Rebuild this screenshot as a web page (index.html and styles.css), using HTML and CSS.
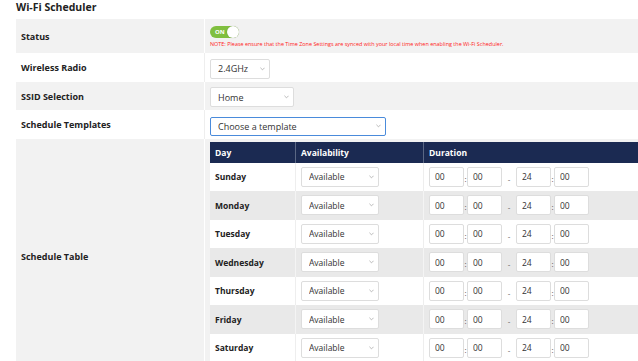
FILE: index.html
```html
<!DOCTYPE html>
<html lang="en">
<head>
  <meta charset="UTF-8">
  <title>Wi-Fi Scheduler</title>
  <link rel="stylesheet" href="styles.css">
</head>
<body>

  <h1 class="title">Wi-Fi Scheduler</h1>

  <table class="settings">
    <tr class="row grey status-row">
      <td class="label">Status</td>
      <td class="value">
        <div class="toggle"><span class="toggle-text">ON</span><span class="knob"></span></div>
        <div class="note">NOTE: Please ensure that the Time Zone Settings are synced with your local time when enabling the Wi-Fi Scheduler.</div>
      </td>
    </tr>
    <tr class="row white">
      <td class="label">Wireless Radio</td>
      <td class="value">
        <span class="select-wrap radio-select">
          <select><option>2.4GHz</option><option>5GHz</option></select>
          <svg class="chev" viewBox="0 0 6 4"><path d="M0.5 0.5 L3 3 L5.5 0.5" fill="none" stroke="#999" stroke-width="0.8"/></svg>
        </span>
      </td>
    </tr>
    <tr class="row grey">
      <td class="label">SSID Selection</td>
      <td class="value">
        <span class="select-wrap ssid-select">
          <select><option>Home</option></select>
          <svg class="chev" viewBox="0 0 6 4"><path d="M0.5 0.5 L3 3 L5.5 0.5" fill="none" stroke="#999" stroke-width="0.8"/></svg>
        </span>
      </td>
    </tr>
    <tr class="row white">
      <td class="label">Schedule Templates</td>
      <td class="value">
        <span class="select-wrap template-select">
          <select><option>Choose a template</option></select>
          <svg class="chev" viewBox="0 0 6 4"><path d="M0.5 0.5 L3 3 L5.5 0.5" fill="none" stroke="#999" stroke-width="0.8"/></svg>
        </span>
      </td>
    </tr>
    <tr class="row grey">
      <td class="label">Schedule Table</td>
      <td class="value table-cell">
        <table class="schedule">
          <thead>
            <tr>
              <th class="col-day">Day</th>
              <th class="col-avail">Availability</th>
              <th class="col-dur">Duration</th>
            </tr>
          </thead>
          <tbody id="days"></tbody>
        </table>
      </td>
    </tr>
  </table>

  <script>
    const days = ['Sunday', 'Monday', 'Tuesday', 'Wednesday', 'Thursday', 'Friday', 'Saturday'];
    const tbody = document.getElementById('days');
    const chev = '<svg class="chev" viewBox="0 0 6 4"><path d="M0.5 0.5 L3 3 L5.5 0.5" fill="none" stroke="#999" stroke-width="0.8"/></svg>';

    days.forEach(day => {
      const tr = document.createElement('tr');
      tr.innerHTML = `
        <td class="day">${day}</td>
        <td><span class="select-wrap avail-select"><select><option>Available</option><option>Unavailable</option></select>${chev}</span></td>
        <td class="duration">
          <input class="time" value="00"><span class="sep colon">:</span><input class="time" value="00"><span class="sep dash">-</span><input class="time" value="24"><span class="sep colon">:</span><input class="time" value="00">
        </td>`;
      tbody.appendChild(tr);
    });
  </script>

</body>
</html>
```

FILE: styles.css
```css
body {
  margin: 0;
  font-family: 'Open Sans', 'Noto Sans', sans-serif;
  background-color: #fff;
  color: #222;
  overflow: hidden;
}

.title {
  margin: 0;
  padding-left: 16px;
  height: 19px;
  font-size: 10.5px;
  line-height: 14px;
  font-weight: 700;
}

.settings {
  margin-left: 16px;
  width: 680px;
  border-collapse: collapse;
}

.row.grey {
  background-color: #f2f2f2;
}

.row.white {
  background-color: #fff;
}

.label {
  width: 183px;
  padding: 0 0 0 5px;
  font-size: 9px;
  font-weight: 700;
  vertical-align: middle;
}

.row.grey .label {
  border-right: 1px solid #fff;
}

.row.white .label {
  border-right: 1px solid #eee;
}

.value {
  padding: 3px 5px;
  height: 22px;
}

.status-row .value {
  padding: 7px 5px 5px;
}

.toggle {
  position: relative;
  width: 29px;
  height: 12px;
  border-radius: 6px;
  background-color: #80bf3f;
}

.toggle-text {
  position: absolute;
  left: 5px;
  top: 0;
  font-size: 6px;
  line-height: 12px;
  font-weight: 700;
  color: #fff;
}

.knob {
  position: absolute;
  right: 0;
  top: 0;
  width: 12px;
  height: 12px;
  border-radius: 50%;
  background-color: #fff;
  box-shadow: 0 0 1px rgba(0, 0, 0, 0.3);
}

.note {
  margin-top: 3px;
  font-size: 5.45px;
  line-height: 7px;
  color: #f22;
  white-space: nowrap;
}

.select-wrap {
  position: relative;
  display: inline-block;
  vertical-align: middle;
}

.select-wrap select {
  appearance: none;
  -webkit-appearance: none;
  display: block;
  height: 20px;
  margin: 0;
  padding: 0 0 0 7px;
  border: 1px solid #ddd;
  border-radius: 2px;
  background-color: #fff;
  font-family: inherit;
  font-size: 9px;
  color: #333;
  outline: none;
}

.chev {
  position: absolute;
  right: 5px;
  top: 8px;
  width: 5px;
  height: 4px;
}

.radio-select select {
  width: 60px;
}

.ssid-select select {
  width: 84px;
}

.template-select select {
  width: 176px;
  height: 19px;
  border-color: #4a8bdb;
}

.template-select .chev {
  top: 7px;
}

.table-cell {
  padding: 3px 0 13px 5px;
}

.schedule {
  width: 100%;
  border-collapse: collapse;
  font-size: 8.5px;
}

.schedule th {
  height: 21px;
  padding: 0 5px;
  text-align: left;
  background-color: #1b2a52;
  color: #fff;
  font-weight: 700;
  border-left: 1px solid #5a6784;
}

.schedule th:first-child {
  border-left: none;
}

.col-day {
  width: 75px;
}

.col-avail {
  width: 117px;
}

.schedule td {
  height: 28.5px;
  padding: 0 5px;
  border-left: 1px solid #eee;
  background-color: #fff;
}

.schedule tbody tr:nth-child(even) td {
  background-color: #e9e9e9;
  border-left-color: #f4f4f4;
}

.schedule td:first-child {
  border-left: none;
}

.day {
  font-weight: 700;
}

.avail-select select {
  width: 78px;
  font-size: 8.5px;
}

.duration {
  white-space: nowrap;
}

.time {
  width: 35px;
  height: 20px;
  box-sizing: border-box;
  margin: 0;
  padding: 0 0 0 5px;
  border: 1px solid #ddd;
  border-radius: 2px;
  font-family: inherit;
  font-size: 8.5px;
  color: #333;
  vertical-align: middle;
  outline: none;
}

.sep {
  display: inline-block;
  vertical-align: middle;
  font-size: 8px;
  line-height: 20px;
  color: #555;
  text-align: center;
}

.colon {
  width: 3px;
  padding-top: 4px;
}

.dash {
  width: 14px;
  padding-top: 4px;
}
```
